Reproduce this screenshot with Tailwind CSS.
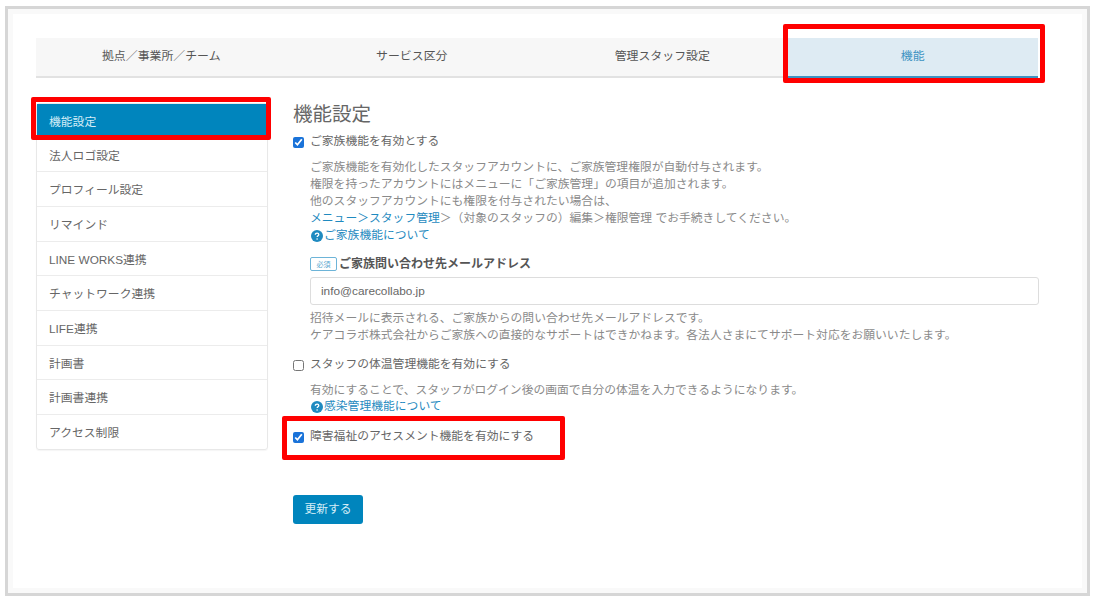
<!DOCTYPE html>
<html lang="ja">
  <head>
    <meta charset="UTF-8" />
    <title>機能設定</title>
    <script src="https://cdn.jsdelivr.net/npm/@tailwindcss/browser@4"></script>
  </head>
  <body class="bg-white w-[1094px] h-[600px] overflow-hidden relative font-['Liberation_Sans','Noto_Sans_CJK_JP',sans-serif] text-[#666]">
    <!-- Outer frame -->
    <div class="ml-[5px] mt-[6px] w-[1085px] h-[590px] border-[3px] border-[#d6d6d6] bg-white">
      <div class="h-full border-[5px] border-[#f9f9f9] pt-[24px] pl-[23px] pr-[44px]">
        <!-- Tabs -->
        <div class="grid grid-cols-4 h-[40px] text-[11.9px] text-[#555]">
          <div class="flex items-center justify-center bg-[#f7f7f7] border-b-2 border-[#e2e2e2]">拠点／事業所／チーム</div>
          <div class="flex items-center justify-center bg-[#f7f7f7] border-b-2 border-[#e2e2e2]">サービス区分</div>
          <div class="flex items-center justify-center bg-[#f7f7f7] border-b-2 border-[#e2e2e2]">管理スタッフ設定</div>
          <div class="flex items-center justify-center bg-[#deebf3] border-b-2 border-[#3d93c2] text-[#3d93c2]">機能</div>
        </div>

        <div class="flex mt-[25px]">
          <!-- Side menu -->
          <div class="w-[232px] shrink-0 text-[11.8px] border border-[#e8e8e8] rounded-[3px] h-[347px] shadow-[0_1px_1px_rgba(0,0,0,0.04)]">
            <div class="h-[33.6px] flex items-center pl-[12px] pt-[4px] bg-[#0085bd] text-[#d5edf7]">機能設定</div>
            <div class="h-[34.7px] flex items-center pl-[12px] pt-[4px] border-b border-[#ececec]">法人ロゴ設定</div>
            <div class="h-[34.7px] flex items-center pl-[12px] pt-[4px] border-b border-[#ececec]">プロフィール設定</div>
            <div class="h-[34.7px] flex items-center pl-[12px] pt-[4px] border-b border-[#ececec]">リマインド</div>
            <div class="h-[34.7px] flex items-center pl-[12px] pt-[4px] border-b border-[#ececec]">LINE WORKS連携</div>
            <div class="h-[34.7px] flex items-center pl-[12px] pt-[4px] border-b border-[#ececec]">チャットワーク連携</div>
            <div class="h-[34.7px] flex items-center pl-[12px] pt-[4px] border-b border-[#ececec]">LIFE連携</div>
            <div class="h-[34.7px] flex items-center pl-[12px] pt-[4px] border-b border-[#ececec]">計画書</div>
            <div class="h-[34.7px] flex items-center pl-[12px] pt-[4px] border-b border-[#ececec]">計画書連携</div>
            <div class="h-[33px] flex items-center pl-[12px] pt-[4px]">アクセス制限</div>
          </div>

          <!-- Main -->
          <div class="ml-[25px] flex-1 text-[11.8px] -mt-[3px]">
            <h1 class="text-[19.5px] leading-[28px] text-[#666]">機能設定</h1>
            <label class="flex items-center h-[20px] mt-[4px]">
              <input type="checkbox" checked class="w-[11px] h-[11px] accent-[#1a73d9] m-0" />
              <span class="ml-[6px]">ご家族機能を有効とする</span>
            </label>
            <div class="ml-[17px] mt-[7px] text-[#8a8a8a] leading-[17px]">
              <p>ご家族機能を有効化したスタッフアカウントに、ご家族管理権限が自動付与されます。</p>
              <p>権限を持ったアカウントにはメニューに「ご家族管理」の項目が追加されます。</p>
              <p>他のスタッフアカウントにも権限を付与されたい場合は、</p>
              <p><span class="text-[#1f8ac0]">メニュー＞スタッフ管理</span>＞（対象のスタッフの）編集＞権限管理 でお手続きしてください。</p>
              <p class="flex items-center text-[#1f8ac0]">
                <svg class="w-[12px] h-[12px] ml-[1px] mr-[1px]" viewBox="0 0 12 12"><circle cx="6" cy="6" r="6" fill="#1f8ac0" /><path d="M4.3 4.7c0-1 .8-1.6 1.8-1.6s1.7.6 1.7 1.5c0 1.2-1.6 1.2-1.6 2.5" fill="none" stroke="#fff" stroke-width="1.3" /><circle cx="6.1" cy="9" r=".8" fill="#fff" /></svg>
                <span>ご家族機能について</span>
              </p>
              <div class="flex items-center mt-[11px] h-[18px]">
                <span class="w-[27px] h-[14px] border border-[#6db4d8] rounded-[2px] text-[7px] text-[#5ba7d0] flex items-center justify-center">必須</span>
                <span class="ml-[2px] text-[12px] font-bold text-[#555]">ご家族問い合わせ先メールアドレス</span>
              </div>
              <div class="mt-[4px] h-[28px] border border-[#ddd] rounded-[3px] flex items-center pl-[10px] text-[#666] text-[11.8px] w-[729px]">info@carecollabo.jp</div>
              <p class="mt-[5px]">招待メールに表示される、ご家族からの問い合わせ先メールアドレスです。</p>
              <p>ケアコラボ株式会社からご家族への直接的なサポートはできかねます。各法人さまにてサポート対応をお願いいたします。</p>
            </div>
            <label class="flex items-center h-[20px] mt-[11px]">
              <input type="checkbox" class="w-[11px] h-[11px] m-0" />
              <span class="ml-[6px]">スタッフの体温管理機能を有効にする</span>
            </label>
            <div class="ml-[17px] mt-[7px] text-[#8a8a8a] leading-[17px]">
              <p>有効にすることで、スタッフがログイン後の画面で自分の体温を入力できるようになります。</p>
              <p class="flex items-center text-[#1f8ac0] -mt-[1px]">
                <svg class="w-[12px] h-[12px] ml-[1px] mr-[1px]" viewBox="0 0 12 12"><circle cx="6" cy="6" r="6" fill="#1f8ac0" /><path d="M4.3 4.7c0-1 .8-1.6 1.8-1.6s1.7.6 1.7 1.5c0 1.2-1.6 1.2-1.6 2.5" fill="none" stroke="#fff" stroke-width="1.3" /><circle cx="6.1" cy="9" r=".8" fill="#fff" /></svg>
                <span>感染管理機能について</span>
              </p>
            </div>
            <label class="flex items-center h-[20px] mt-[12px]">
              <input type="checkbox" checked class="w-[11px] h-[11px] accent-[#1a73d9] m-0" />
              <span class="ml-[6px]">障害福祉のアセスメント機能を有効にする</span>
            </label>
            <button class="mt-[48px] w-[70px] h-[29px] bg-[#0085bd] text-[#d5edf7] rounded-[3px] text-[11.8px]">更新する</button>
          </div>
        </div>
      </div>
    </div>

    <!-- Red annotation boxes -->
    <div class="absolute left-[783px] top-[24px] w-[262px] h-[59px] border-[5px] border-[#ff0000] rounded-[2px]"></div>
    <div class="absolute left-[31px] top-[97px] w-[240px] h-[43px] border-[5px] border-[#ff0000] rounded-[2px]"></div>
    <div class="absolute left-[282px] top-[416px] w-[283px] h-[44px] border-[5px] border-[#ff0000] rounded-[2px]"></div>
  </body>
</html>
